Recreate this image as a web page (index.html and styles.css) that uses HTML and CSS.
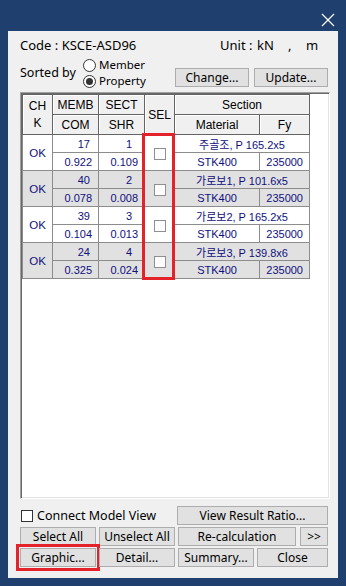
FILE: index.html
```html
<!DOCTYPE html>
<html lang="ko">
<head>
    <meta charset="UTF-8">
    <meta name="viewport" content="width=device-width, initial-scale=1.0">
    <title>Steel Code Check</title>
    <link rel="stylesheet" href="styles.css">
</head>
<body>
    <div class="window">
        <div class="titlebar">
            <svg class="close-icon" width="14" height="14" viewBox="0 0 14 14">
                <path d="M1 1L13 13M13 1L1 13" stroke="#fff" stroke-width="1.2" fill="none"/>
            </svg>
        </div>

        <div class="client">
            <div class="info-row">
                <span class="code">Code : KSCE-ASD96</span>
                <span class="unit-label">Unit :</span>
                <span class="unit-force">kN</span>
                <span class="unit-sep">,</span>
                <span class="unit-len">m</span>
            </div>

            <div class="sort-row">
                <span class="sort-label">Sorted by</span>
                <div class="radio-group">
                    <label class="radio"><span class="radio-dot"></span>Member</label>
                    <label class="radio"><span class="radio-dot checked"></span>Property</label>
                </div>
                <div class="sort-buttons">
                    <button class="btn btn-top">Change...</button>
                    <button class="btn btn-top">Update...</button>
                </div>
            </div>

            <div class="list-box">
                <table class="grid">
                    <colgroup>
                        <col style="width:30px">
                        <col style="width:46px">
                        <col style="width:46px">
                        <col style="width:30px">
                        <col style="width:85px">
                        <col style="width:50px">
                    </colgroup>
                    <thead>
                        <tr>
                            <th rowspan="2" class="chk-head">CH<br>K</th>
                            <th>MEMB</th>
                            <th>SECT</th>
                            <th rowspan="2">SEL</th>
                            <th colspan="2">Section</th>
                        </tr>
                        <tr>
                            <th>COM</th>
                            <th>SHR</th>
                            <th>Material</th>
                            <th>Fy</th>
                        </tr>
                    </thead>
                    <tbody>
                        <tr>
                            <td rowspan="2" class="ok">OK</td>
                            <td class="num memb">17</td>
                            <td class="num sect">1</td>
                            <td rowspan="2" class="sel"><span class="sel-box"></span></td>
                            <td colspan="2" class="section">주골조, P 165.2x5</td>
                        </tr>
                        <tr>
                            <td class="num">0.922</td>
                            <td class="num">0.109</td>
                            <td class="mat">STK400</td>
                            <td class="num">235000</td>
                        </tr>
                        <tr class="shade">
                            <td rowspan="2" class="ok">OK</td>
                            <td class="num memb">40</td>
                            <td class="num sect">2</td>
                            <td rowspan="2" class="sel"><span class="sel-box"></span></td>
                            <td colspan="2" class="section">가로보1, P 101.6x5</td>
                        </tr>
                        <tr class="shade">
                            <td class="num">0.078</td>
                            <td class="num">0.008</td>
                            <td class="mat">STK400</td>
                            <td class="num">235000</td>
                        </tr>
                        <tr>
                            <td rowspan="2" class="ok">OK</td>
                            <td class="num memb">39</td>
                            <td class="num sect">3</td>
                            <td rowspan="2" class="sel"><span class="sel-box"></span></td>
                            <td colspan="2" class="section">가로보2, P 165.2x5</td>
                        </tr>
                        <tr>
                            <td class="num">0.104</td>
                            <td class="num">0.013</td>
                            <td class="mat">STK400</td>
                            <td class="num">235000</td>
                        </tr>
                        <tr class="shade">
                            <td rowspan="2" class="ok">OK</td>
                            <td class="num memb">24</td>
                            <td class="num sect">4</td>
                            <td rowspan="2" class="sel"><span class="sel-box"></span></td>
                            <td colspan="2" class="section">가로보3, P 139.8x6</td>
                        </tr>
                        <tr class="shade">
                            <td class="num">0.325</td>
                            <td class="num">0.024</td>
                            <td class="mat">STK400</td>
                            <td class="num">235000</td>
                        </tr>
                    </tbody>
                </table>
                <div class="sel-highlight"></div>
            </div>

            <div class="btn-row first">
                <label class="check"><span class="check-box"></span>Connect Model View</label>
                <button class="btn w-view">View Result Ratio...</button>
            </div>
            <div class="btn-row">
                <button class="btn w-std">Select All</button>
                <button class="btn w-std">Unselect All</button>
                <button class="btn w-recalc">Re-calculation</button>
                <button class="btn w-more">&gt;&gt;</button>
            </div>
            <div class="btn-row">
                <button class="btn w-std marked">Graphic...</button>
                <button class="btn w-std">Detail...</button>
                <button class="btn w-std">Summary...</button>
                <button class="btn w-close">Close</button>
            </div>
        </div>
    </div>
</body>
</html>
```

FILE: styles.css
```css
* {
    margin: 0;
    padding: 0;
    box-sizing: border-box;
}

body {
    width: 346px;
    height: 586px;
    overflow: hidden;
    background: #1f3f6e;
    font-family: 'Noto Sans', 'Noto Sans CJK KR', sans-serif;
    font-size: 12px;
    color: #000;
}

.window {
    height: 586px;
    display: flex;
    flex-direction: column;
    background: #1f3f6e;
    border-radius: 7px 7px 0 0;
}

.titlebar {
    height: 31px;
    position: relative;
}

.close-icon {
    position: absolute;
    left: 321px;
    top: 13px;
}

.client {
    flex: 1;
    margin: 0 8px 8px 8px;
    padding: 0 8px 0 12px;
    background: #f0f0f0;
}

/* top info */
.info-row {
    display: flex;
    align-items: center;
    height: 20px;
    margin-top: 4px;
    font-size: 13px;
}

.code {
    width: 200px;
}

.unit-label {
    width: 37px;
}

.unit-force {
    width: 31px;
}

.unit-sep {
    width: 18px;
}

/* sort row */
.sort-row {
    display: flex;
    height: 31px;
    margin-top: 2px;
}

.sort-label {
    width: 63px;
    line-height: 32px;
    font-size: 12.5px;
}

.radio-group {
    display: flex;
    flex-direction: column;
}

.radio {
    display: flex;
    align-items: center;
    height: 16px;
    line-height: 16px;
    font-size: 11.5px;
}

.radio-dot {
    width: 13px;
    height: 13px;
    margin-right: 3px;
    border: 1px solid #333;
    border-radius: 50%;
    background: #fff;
    position: relative;
}

.radio-dot.checked::after {
    content: '';
    position: absolute;
    left: 2px;
    top: 2px;
    width: 7px;
    height: 7px;
    border-radius: 50%;
    background: #333;
}

.sort-buttons {
    display: flex;
    gap: 5px;
    margin-left: auto;
    margin-right: 2px;
    margin-top: 11px;
}

.btn {
    height: 19px;
    background: #e1e1e1;
    border: 1px solid #adadad;
    font-family: 'Noto Sans', 'Noto Sans CJK KR', sans-serif;
    font-size: 12px;
    color: #000;
    line-height: 16px;
}

.btn-top {
    width: 74px;
}

/* result list */
.list-box {
    position: relative;
    height: 407px;
    margin-top: 4px;
    padding: 1px;
    background: #fff;
    border: 1px solid;
    border-color: #a0a0a0 #fff #fff #a0a0a0;
    box-shadow: inset 1px 1px #696969, inset -1px -1px #e3e3e3;
}

.grid {
    width: 287px;
    table-layout: fixed;
    border-collapse: collapse;
    font-family: 'Liberation Sans', 'Noto Sans CJK KR', sans-serif;
    font-size: 11px;
}

.grid th {
    height: 20px;
    background: #f0f0f0;
    border: 1px solid #646464;
    box-shadow: inset 1px 1px #fff;
    font-weight: normal;
    font-size: 12px;
    color: #000;
    text-align: center;
}

.grid .chk-head {
    line-height: 17px;
}

.grid td {
    height: 18px;
    border: 1px solid #8c8c8c;
    color: #101080;
    white-space: nowrap;
    overflow: hidden;
}

.grid tr.shade td {
    background: #e1e1e1;
}

.ok,
.mat,
.section,
.sel {
    text-align: center;
}

.ok {
    font-size: 11.5px;
}

.num {
    text-align: right;
    padding-right: 6px;
}

.num.memb {
    padding-right: 8px;
}

.num.sect {
    padding-right: 12px;
}

.section {
    font-size: 11px;
}

.sel-box {
    display: inline-block;
    width: 12px;
    height: 12px;
    margin-top: 3px;
    border: 1px solid #8f8f8f;
    background: #fff;
    vertical-align: middle;
}

.sel-highlight {
    position: absolute;
    left: 121px;
    top: 40px;
    width: 33px;
    height: 147px;
    border: 3px solid #e3222a;
}

/* bottom buttons */
.btn-row {
    display: flex;
    gap: 3px;
    margin-top: 2px;
    margin-right: 2px;
}

.btn-row.first {
    margin-top: 7px;
    margin-bottom: 2px;
    justify-content: space-between;
}

.check {
    display: flex;
    align-items: center;
    font-size: 12.5px;
}

.check-box {
    width: 12px;
    height: 12px;
    margin-left: 1px;
    margin-right: 4px;
    border: 1px solid #333;
    background: #fff;
}

.w-view {
    width: 151px;
}

.w-std {
    width: 76px;
}

.w-recalc {
    width: 118px;
}

.w-more {
    width: 28px;
    margin-left: 1px;
}

.w-close {
    width: 71px;
}

.marked {
    outline: 3px solid #e3222a;
    outline-offset: 1px;
}
```
